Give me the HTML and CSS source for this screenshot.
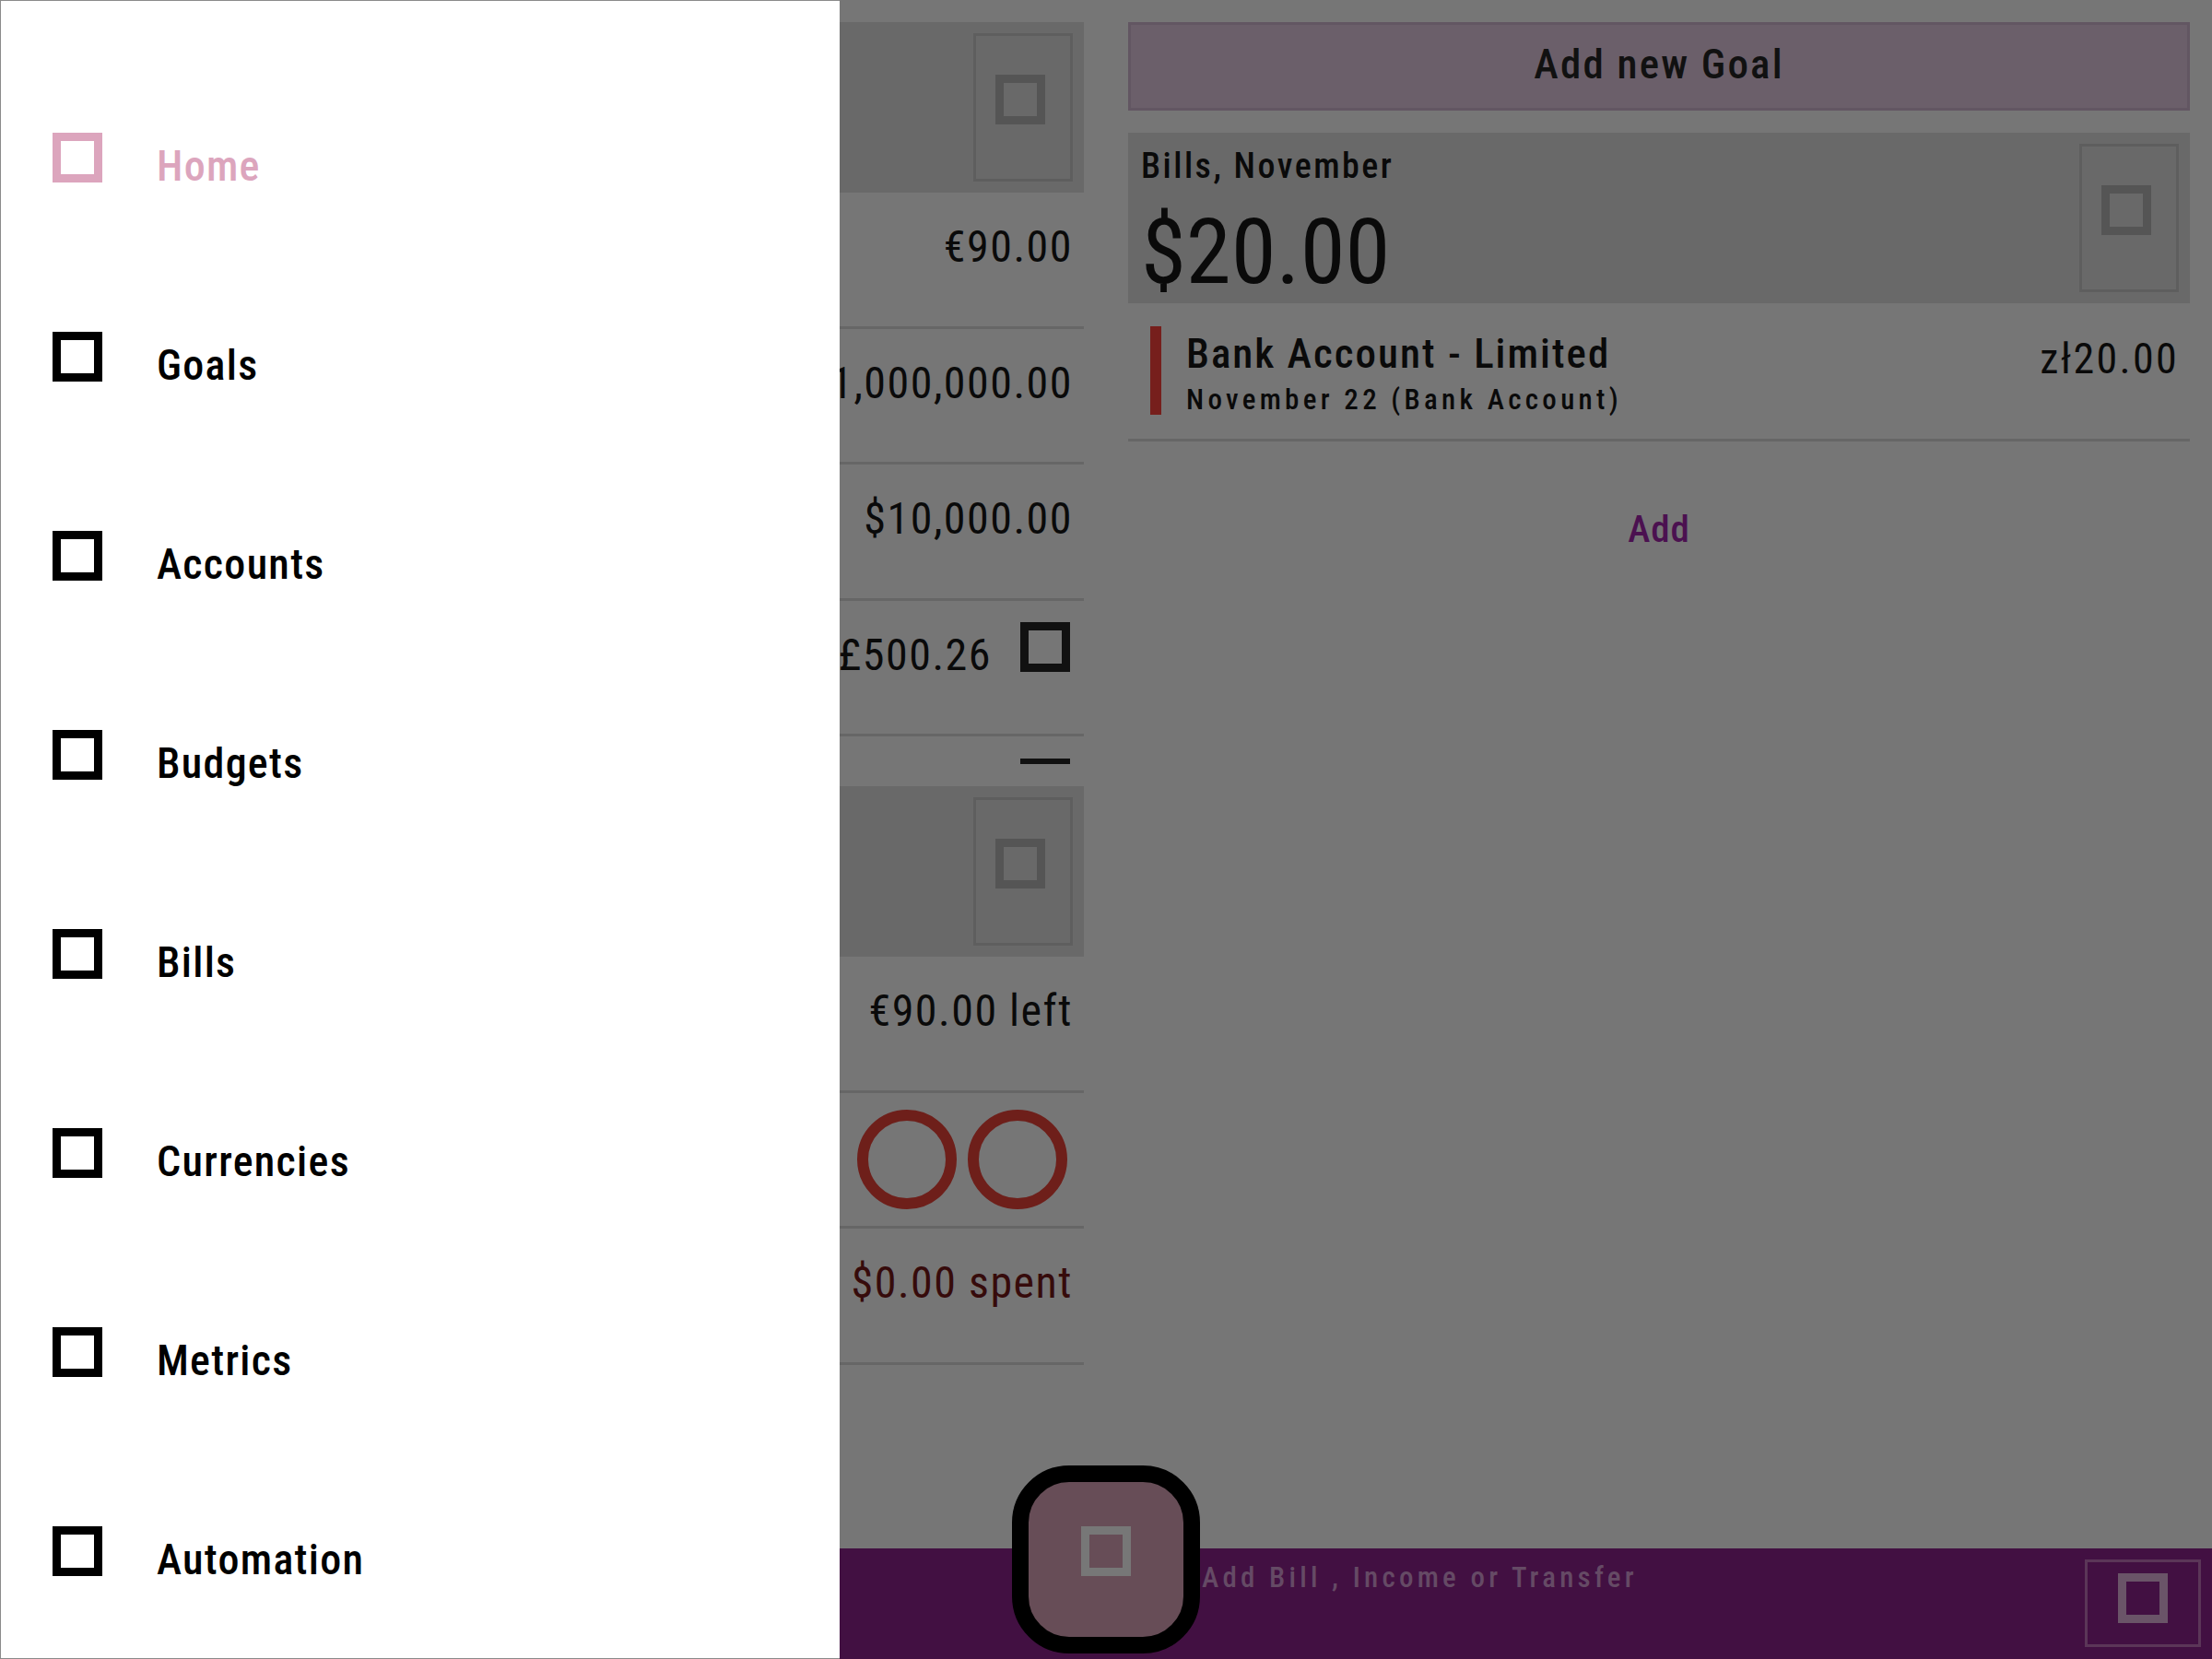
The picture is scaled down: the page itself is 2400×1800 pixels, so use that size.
FILE: index.html
```html
<!DOCTYPE html>
<html lang="en">
<head>
<meta charset="utf-8">
<title>Budget app – navigation drawer</title>
<link rel="stylesheet" href="styles.css">
</head>
<body>
<div class="screen">
  <div class="app">
    <main class="columns">
      <section class="col">
        <div class="card">
          <div class="card-body"></div>
          <div class="icon-box"><span class="sq"></span></div>
        </div>
        <div class="row"><span class="amount">€90.00</span></div>
        <div class="row"><span class="amount">¥1,000,000.00</span></div>
        <div class="row"><span class="amount">$10,000.00</span></div>
        <div class="row"><span class="amount">£500.26</span><span class="sq sq-dark"></span></div>
        <div class="minus-row"><span class="minus"></span></div>
        <div class="card">
          <div class="card-body"></div>
          <div class="icon-box"><span class="sq"></span></div>
        </div>
        <div class="row"><span class="amount">€90.00 left</span></div>
        <div class="row row-rings"><span class="ring"></span><span class="ring"></span></div>
        <div class="row"><span class="amount spent">$0.00 spent</span></div>
      </section>

      <section class="col">
        <div class="goal-btn">Add new Goal</div>
        <div class="card">
          <div class="card-body">
            <div class="card-title">Bills, November</div>
            <div class="card-big">$20.00</div>
          </div>
          <div class="icon-box"><span class="sq"></span></div>
        </div>
        <div class="bill-row">
          <span class="bill-mark"></span>
          <div class="bill-text">
            <div class="bill-title">Bank Account - Limited</div>
            <div class="bill-sub">November 22 (Bank Account)</div>
          </div>
          <div class="bill-amount">zł20.00</div>
        </div>
        <div class="add-link">Add</div>
      </section>
    </main>

    <footer class="bottom-bar">
      <div class="bar-left"></div>
      <div class="fab-slot">
        <div class="fab"><span class="sq sq-fab"></span></div>
      </div>
      <div class="bar-right">
        <span class="bar-text">Add Bill , Income or Transfer</span>
        <div class="bar-btn"><span class="sq sq-bar"></span></div>
      </div>
    </footer>
  </div>

  <nav class="drawer">
    <div class="nav-item active"><span class="sq"></span><span class="nav-label">Home</span></div>
    <div class="nav-item"><span class="sq"></span><span class="nav-label">Goals</span></div>
    <div class="nav-item"><span class="sq"></span><span class="nav-label">Accounts</span></div>
    <div class="nav-item"><span class="sq"></span><span class="nav-label">Budgets</span></div>
    <div class="nav-item"><span class="sq"></span><span class="nav-label">Bills</span></div>
    <div class="nav-item"><span class="sq"></span><span class="nav-label">Currencies</span></div>
    <div class="nav-item"><span class="sq"></span><span class="nav-label">Metrics</span></div>
    <div class="nav-item"><span class="sq"></span><span class="nav-label">Automation</span></div>
  </nav>
</div>
</body>
</html>
```

FILE: styles.css
```css
* {
  box-sizing: border-box;
  margin: 0;
  padding: 0;
}

html, body {
  width: 2400px;
  height: 1800px;
  overflow: hidden;
}

body {
  font-family: "Roboto Condensed", Roboto, "Liberation Sans", sans-serif;
  background: #767676;
  color: #0a0a0a;
}

.screen {
  position: relative;
  width: 2400px;
  height: 1800px;
  overflow: hidden;
}

/* generic square outline icon */
.sq {
  display: block;
  flex: none;
  width: 54px;
  height: 54px;
  border: 9px solid currentColor;
}

/* ---------- background app ---------- */
.app {
  height: 100%;
  display: flex;
  flex-direction: column;
  background: #767676;
}

.columns {
  flex: 1;
  display: grid;
  grid-template-columns: 1152px 1152px;
  column-gap: 48px;
  padding: 24px;
  align-items: start;
}

.col {
  display: flex;
  flex-direction: column;
}

.card {
  height: 185px;
  background: #696969;
  display: flex;
  justify-content: space-between;
  align-items: flex-start;
  padding: 12px;
}

.card-body {
  padding: 2px 0 0 2px;
}

.icon-box {
  width: 108px;
  height: 161px;
  border: 3px solid #5e5e5e;
  padding: 42px 0 0 21px;
  color: #555555;
}

.card-title {
  font-size: 38px;
  line-height: 44px;
  font-weight: 500;
  letter-spacing: 2.5px;
}

.card-big {
  margin-top: 17px;
  font-size: 99px;
  line-height: 108px;
  font-weight: 400;
}

.row {
  height: 147.5px;
  border-bottom: 3px solid #666666;
  display: flex;
  justify-content: flex-end;
  align-items: flex-start;
  padding: 31px 12px 0 0;
}

.amount {
  font-size: 48px;
  line-height: 56px;
  letter-spacing: 1.5px;
  white-space: nowrap;
}

.spent {
  color: #360b0b;
}

.sq-dark {
  color: #111111;
  margin: -8px 3px 0 31px;
}

.minus-row {
  height: 54px;
  display: flex;
  justify-content: flex-end;
  align-items: center;
  padding-right: 15px;
}

.minus {
  display: block;
  width: 54px;
  height: 6px;
  background: #111111;
}

.row-rings {
  align-items: center;
  padding: 0 18px 0 0;
  gap: 12px;
}

.ring {
  display: block;
  width: 108px;
  height: 108px;
  border-radius: 50%;
  border: 12px solid #6e1f1a;
}

.goal-btn {
  height: 96px;
  margin-bottom: 24px;
  background: #6b5f6a;
  border: 3px solid #625662;
  display: flex;
  align-items: center;
  justify-content: center;
  padding-bottom: 6px;
  font-size: 45px;
  font-weight: 500;
  letter-spacing: 2.2px;
  color: #111111;
}

.bill-row {
  height: 150px;
  border-bottom: 3px solid #666666;
  display: flex;
  align-items: flex-start;
  padding: 25px 12px 0 24px;
}

.bill-mark {
  display: block;
  width: 12px;
  height: 96px;
  background: #761f1c;
  flex: none;
}

.bill-text {
  flex: 1;
  padding: 4px 0 0 27px;
}

.bill-title {
  font-size: 45px;
  line-height: 52px;
  font-weight: 500;
  letter-spacing: 2px;
}

.bill-sub {
  margin-top: 4px;
  font-size: 31px;
  line-height: 40px;
  font-weight: 500;
  letter-spacing: 4.3px;
}

.bill-amount {
  padding-top: 8px;
  font-size: 46px;
  line-height: 54px;
  letter-spacing: 2.3px;
}

.add-link {
  margin-top: 71px;
  text-align: center;
  font-size: 41px;
  line-height: 48px;
  font-weight: 500;
  letter-spacing: 1px;
  color: #4b1150;
}

/* ---------- bottom app bar ---------- */
.bottom-bar {
  position: relative;
  height: 120px;
  flex: none;
  background: #421042;
  display: grid;
  grid-template-columns: 1fr 208px 1fr;
}

.fab-slot {
  position: relative;
}

.fab {
  position: absolute;
  left: 2px;
  top: -90px;
  width: 204px;
  height: 204px;
  border: 18px solid #000000;
  border-radius: 62px;
  background: #674d57;
  display: flex;
  justify-content: center;
  align-items: flex-start;
  padding-top: 48px;
}

.sq-fab {
  color: #777777;
}

.bar-right {
  display: flex;
  justify-content: space-between;
  align-items: flex-start;
}

.bar-text {
  padding-top: 14px;
  font-size: 31px;
  line-height: 36px;
  font-weight: 500;
  letter-spacing: 4.25px;
  color: #654a65;
  white-space: nowrap;
}

.bar-btn {
  width: 126px;
  height: 95px;
  margin: 12px 12px 0 0;
  border: 3px solid #5b3658;
  padding: 12px 0 0 33px;
}

.sq-bar {
  color: #6a5468;
}

/* ---------- navigation drawer ---------- */
.drawer {
  position: absolute;
  left: 0;
  top: 0;
  width: 911px;
  height: 1800px;
  background: #ffffff;
  border: 1px solid #8a8a8a;
  border-right: none;
  padding-top: 62px;
  display: flex;
  flex-direction: column;
}

.nav-item {
  height: 216px;
  display: flex;
  align-items: center;
  padding-left: 56px;
  color: #000000;
}

.nav-item.active {
  color: #dca5bd;
}

.nav-label {
  margin-left: 59px;
  padding-top: 18px;
  font-size: 46px;
  line-height: 54px;
  font-weight: 500;
  letter-spacing: 1.3px;
}
```
